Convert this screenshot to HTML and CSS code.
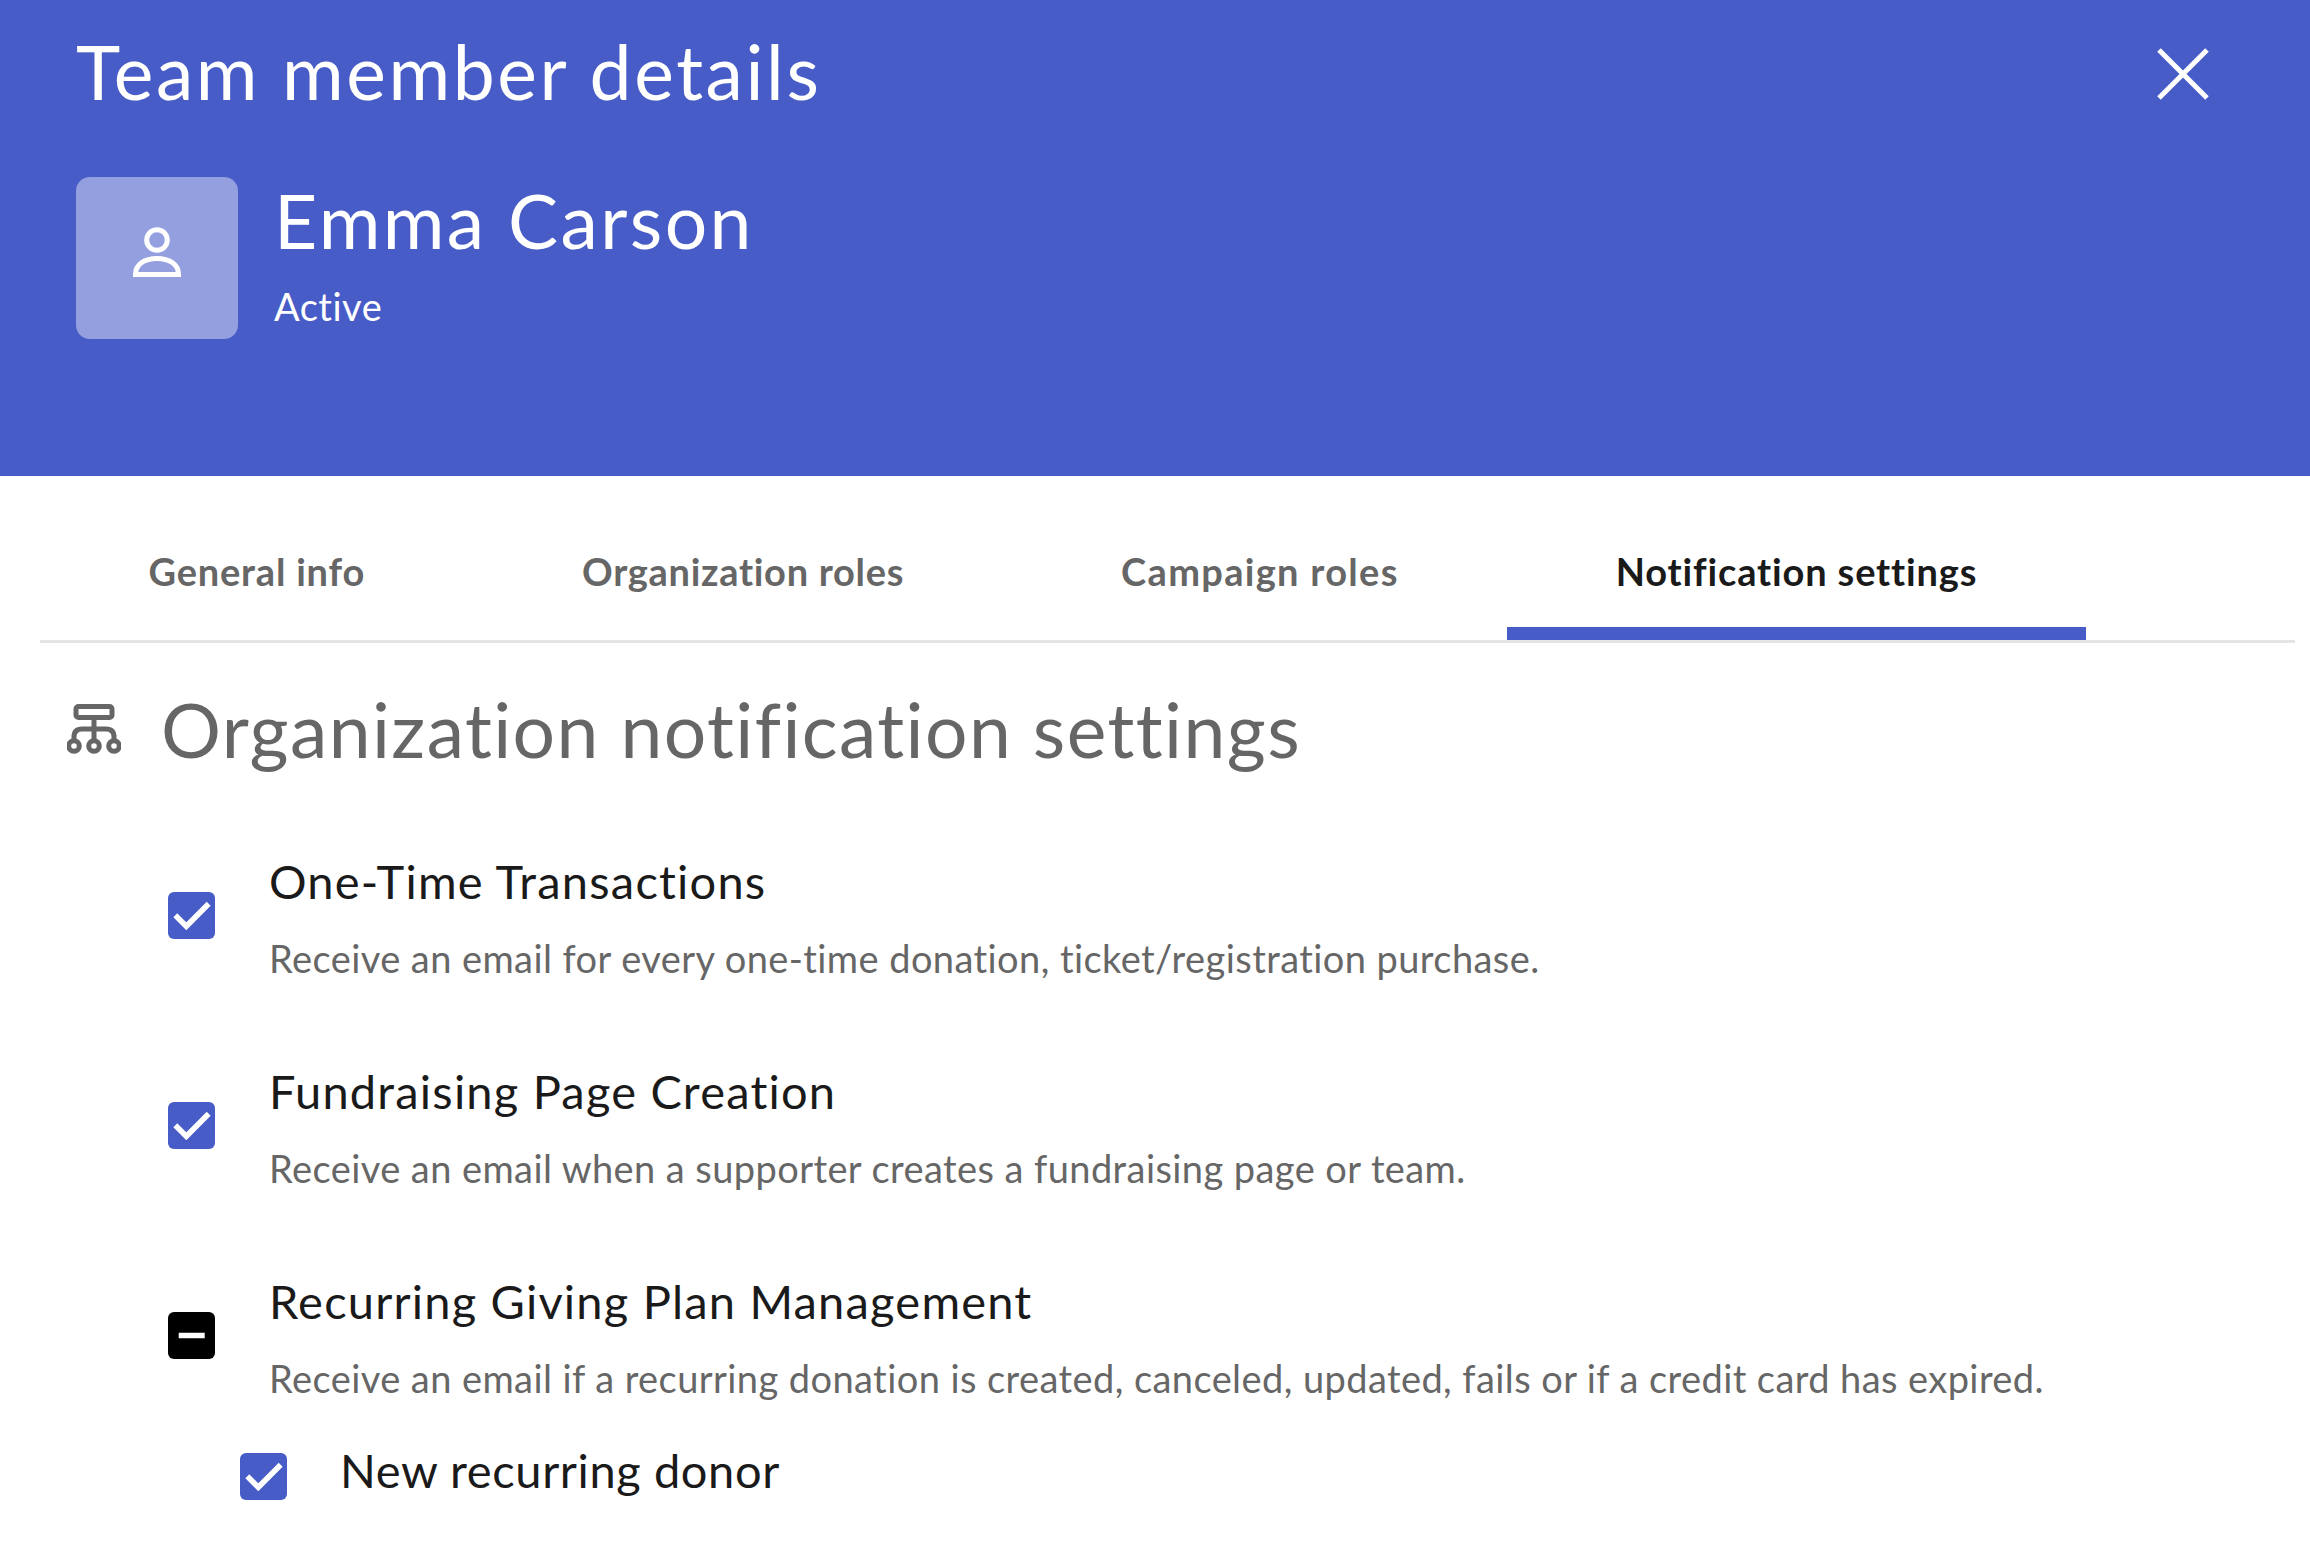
FILE: index.html
```html
<!DOCTYPE html>
<html lang="en">
<head>
<meta charset="utf-8">
<title>Team member details</title>
<link rel="stylesheet" href="styles.css">
</head>
<body>
<header class="header">
  <div class="header-top">
    <h1 class="title">Team member details</h1>
    <svg class="close" viewBox="0 0 52 52"><path d="M2 2 50 50M50 2 2 50"/></svg>
  </div>
  <div class="member">
    <div class="avatar">
      <svg class="avatar-icon" viewBox="0 0 48 50"><circle cx="24" cy="13" r="10.300"/><path d="M2.500 47.500C2.500 37 12 31.500 24 31.500s21.500 5.500 21.500 16z"/></svg>
    </div>
    <div class="member-info">
      <div class="name">Emma Carson</div>
      <div class="status">Active</div>
    </div>
  </div>
</header>
<nav class="tabs">
  <div class="tab">General info</div>
  <div class="tab tab-org">Organization roles</div>
  <div class="tab tab-campaign">Campaign roles</div>
  <div class="tab tab-active">Notification settings</div>
</nav>
<main class="content">
  <div class="section-head">
    <svg class="org-icon" viewBox="0 0 54 50"><rect x="9" y="2.500" width="36" height="11" rx="2.500"/><path d="M27 14V37M7 37V33Q7 25 15 25H39Q47 25 47 33V37"/><circle cx="7" cy="42" r="5.300"/><circle cx="27" cy="42" r="5.300"/><circle cx="47" cy="42" r="5.300"/></svg>
    <h2 class="section-title">Organization notification settings</h2>
  </div>
  <div class="option">
    <span class="box"><svg viewBox="0 0 47 47"><path class="tick" d="M7.300 23.300 18.300 34.300 40.700 11.700"/></svg></span>
    <div class="option-text">
      <div class="option-title">One-Time Transactions</div>
      <div class="option-desc">Receive an email for every one-time donation, ticket/registration purchase.</div>
    </div>
  </div>
  <div class="option">
    <span class="box"><svg viewBox="0 0 47 47"><path class="tick" d="M7.300 23.300 18.300 34.300 40.700 11.700"/></svg></span>
    <div class="option-text">
      <div class="option-title">Fundraising Page Creation</div>
      <div class="option-desc">Receive an email when a supporter creates a fundraising page or team.</div>
    </div>
  </div>
  <div class="option">
    <span class="box box-mixed"><svg viewBox="0 0 47 47"><path class="tick" d="M10.700 23.500H36.700"/></svg></span>
    <div class="option-text">
      <div class="option-title">Recurring Giving Plan Management</div>
      <div class="option-desc">Receive an email if a recurring donation is created, canceled, updated, fails or if a credit card has expired.</div>
    </div>
  </div>
  <div class="option option-sub">
    <span class="box box-sub"><svg viewBox="0 0 47 47"><path class="tick" d="M7.300 23.300 18.300 34.300 40.700 11.700"/></svg></span>
    <div class="option-text">
      <div class="option-title">New recurring donor</div>
    </div>
  </div>
</main>
</body>
</html>
```
FILE: styles.css
```css
* { box-sizing: border-box; }
html, body { margin: 0; padding: 0; background: #fff; }
body {
  width: 2310px;
  height: 1548px;
  overflow: hidden;
  font-family: "Lato", "Noto Sans", sans-serif;
  font-variant-ligatures: none;
  color: #1a1a1a;
}
.header {
  height: 476px;
  background: #475cc7;
  color: #fff;
  padding: 21px 101px 0 76px;
}
.header-top {
  display: flex;
  justify-content: space-between;
  align-items: center;
  height: 100px;
}
.title {
  margin: 0;
  font-size: 75px;
  line-height: 100px;
  font-weight: 400;
  letter-spacing: 2.6px;
}
.close {
  width: 52px;
  height: 52px;
  margin-top: 5px;
  fill: none;
  stroke: #fff;
  stroke-width: 5;
}
.member {
  display: flex;
  gap: 36px;
  margin-top: 56px;
}
.avatar {
  width: 162px;
  height: 162px;
  border-radius: 14px;
  background: #939fdf;
  display: flex;
  align-items: center;
  justify-content: center;
  padding: 0 0 12px 0;
}
.avatar-icon {
  width: 48px;
  height: 50px;
  fill: none;
  stroke: #fff;
  stroke-width: 5;
}
.name {
  font-size: 75px;
  line-height: 90px;
  margin-top: -2px;
  font-weight: 400;
  letter-spacing: 2.4px;
}
.status {
  font-size: 38px;
  line-height: 50px;
  margin-top: 16px;
  font-weight: 400;
  letter-spacing: 0.5px;
}
.tabs {
  display: flex;
  margin: 0 15px 0 40px;
  height: 167px;
  border-bottom: 3px solid #e4e4e4;
}
.tab {
  padding: 70px 108.500px 0;
  font-size: 38px;
  line-height: 50px;
  font-weight: 700;
  letter-spacing: 0.8px;
  color: #666;
  height: 164px;
}
.tab-org { letter-spacing: 0.7px; }
.tab-campaign { letter-spacing: 1.3px; }
.tab-active {
  color: #1a1a1a;
  letter-spacing: 0.85px;
  border-bottom: 13px solid #475cc7;
}
.content { padding: 0 0 0 67px; }
.section-head {
  display: flex;
  align-items: center;
  gap: 40px;
  margin-top: 36px;
  height: 100px;
}
.org-icon {
  width: 54px;
  height: 50px;
  fill: none;
  stroke: #666;
  stroke-width: 5;
}
.section-title {
  margin: 0;
  font-size: 75px;
  line-height: 100px;
  font-weight: 400;
  color: #666;
  letter-spacing: 1.42px;
}
.option {
  display: flex;
  gap: 54px;
  align-items: flex-start;
  margin-left: 101px;
  margin-top: 34px;
  height: 176px;
}
.section-head + .option { margin-top: 72px; }
.option-sub {
  gap: 53px;
  margin-left: 173px;
  margin-top: -7px;
  height: auto;
}
.box {
  flex: none;
  width: 47px;
  height: 47px;
  margin-top: 41px;
  border-radius: 6px;
  background: #475cc7;
}
.box-sub { margin-top: 13px; }
.box-mixed { background: #000; }
.box svg { display: block; width: 47px; height: 47px; }
.tick { fill: none; stroke: #fff; stroke-width: 5.500; }
.option-title {
  font-size: 47px;
  line-height: 60px;
  font-weight: 400;
  letter-spacing: 1.2px;
}
.option-sub .option-title { letter-spacing: 0.6px; }
.option-desc {
  font-size: 38px;
  line-height: 50px;
  margin-top: 22px;
  color: #666;
  letter-spacing: 0.42px;
}
```
